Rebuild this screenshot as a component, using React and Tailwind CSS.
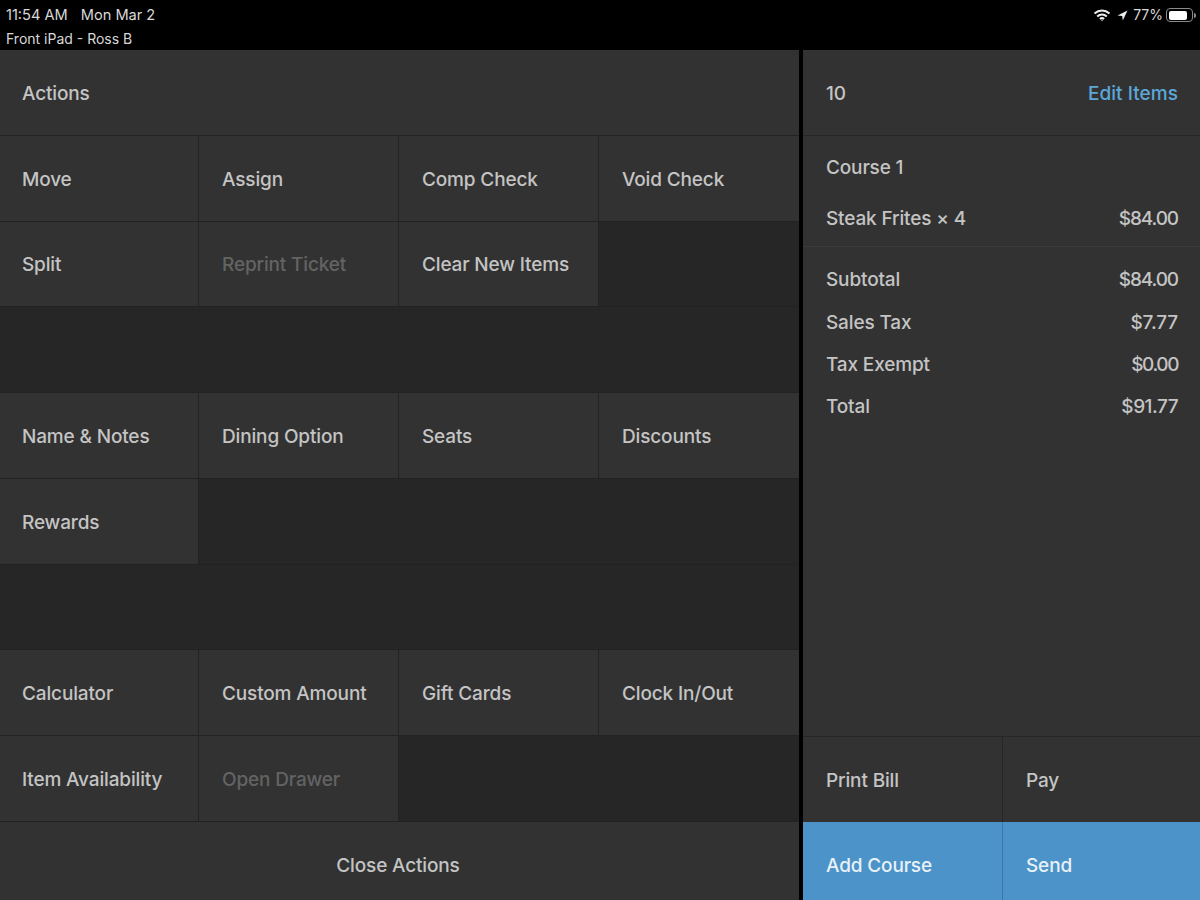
import React from "react";

const font = "font-['Inter','Liberation_Sans',sans-serif]";

function Cell({ label, dim, col }) {
  return (
    <div className={`flex h-full items-center bg-[#323232] border-b border-[#222222] pt-[2px] ${col === 0 ? "pl-[22px]" : "pl-[23px]"} ${col === 3 ? "" : "border-r"} ${dim ? "text-[#636363]" : "text-[#c4c4c4]"}`}>
      {label}
    </div>
  );
}

function Section({ rows }) {
  return (
    <div className="grid grid-cols-[199px_200px_200px_200px] auto-rows-[85.75px] bg-[#262626]">
      {rows.flat().map((c, i) =>
        c ? <Cell key={i} label={c.label || c} dim={c.dim} col={i % 4} /> : <div key={i} className="border-b border-[#222222]" />
      )}
    </div>
  );
}

function Line({ a, b, cls }) {
  return (
    <div className="flex h-[42.3px] items-center justify-between">
      <span>{a}</span>
      <span className={cls}>{b}</span>
    </div>
  );
}

export default function App() {
  return (
    <div className={`flex h-[900px] w-[1200px] flex-col overflow-hidden bg-black text-[19px] font-medium leading-none tracking-[-0.15px] ${font}`}>
      <div className="flex h-[50px] shrink-0 justify-between pl-[6px] pr-[4px] text-[14px] font-normal tracking-normal text-[#d8d8d8]">
        <div className="pt-[7px]">
          <div className="flex h-[16px] items-center gap-[13px] text-[14.6px]"><span>11:54 AM</span><span>Mon Mar 2</span></div>
          <div className="mt-[9px]">Front iPad - Ross B</div>
        </div>
        <div className="mt-[7px] flex h-[16px] items-center gap-[3px]">
          <svg width="18" height="13" viewBox="0 0 18 13" fill="none" stroke="#eeeeee" strokeWidth="2">
            <path d="M1.5 4.6C6 .6 12 .6 16.5 4.6" />
            <path d="M4.2 7.4c2.8-2.4 6.8-2.4 9.6 0" />
            <path d="M6.9 10c1.2-1 3-1 4.2 0" />
            <circle cx="9" cy="11.6" r=".7" fill="#eeeeee" stroke="none" />
          </svg>
          <svg width="11" height="11" viewBox="0 0 11 11" className="ml-[3px]"><path d="M10.5.5 .5 5.4l4.7.5.6 4.7z" fill="#eeeeee" /></svg>
          <span className="ml-[2px]">77%</span>
          <div className="flex h-[14px] w-[27px] rounded-[4px] border border-[#8a8a8a] p-[1.5px]">
            <div className="h-full w-[18px] rounded-[2px] bg-white" />
          </div>
          <div className="ml-[-2px] h-[5px] w-[2px] rounded-r-sm bg-[#8a8a8a]" />
        </div>
      </div>

      <div className="flex h-[857.5px] shrink-0">
        <div className="flex w-[799px] shrink-0 flex-col bg-[#262626]">
          <div className="flex h-[85.75px] shrink-0 items-center border-b border-[#222222] bg-[#323232] pl-[22px] pt-[3px] text-[#c4c4c4]">Actions</div>
          <Section rows={[["Move", "Assign", "Comp Check", "Void Check"], ["Split", { label: "Reprint Ticket", dim: true }, "Clear New Items", null], [null, null, null, null]]} />
          <Section rows={[["Name & Notes", "Dining Option", "Seats", "Discounts"], ["Rewards", null, null, null], [null, null, null, null]]} />
          <Section rows={[["Calculator", "Custom Amount", "Gift Cards", "Clock In/Out"], ["Item Availability", { label: "Open Drawer", dim: true }, null, null]]} />
          <div className="flex h-[85.75px] shrink-0 items-center justify-center bg-[#323232] pr-[3px] pt-[1px] text-[#c4c4c4]">Close Actions</div>
        </div>
        <div className="ml-[4px] flex w-[397px] shrink-0 flex-col bg-[#323232] text-[#c4c4c4]">
          <div className="flex h-[85.75px] shrink-0 items-center justify-between border-b border-[#262626] pl-[23px] pr-[22px] pt-[3px]">
            <span>10</span>
            <span className="tracking-[0.05px] text-[#5ba8d9]">Edit Items</span>
          </div>
          <div className="flex h-[63px] shrink-0 items-center pl-[23px]">Course 1</div>
          <div className="flex h-[48px] shrink-0 items-center justify-between border-b border-[#3b3b3b] pb-[7px] pl-[23px] pr-[22px]">
            <span>Steak Frites × 4</span>
            <span className="tracking-[-1.1px]">$84.00</span>
          </div>
          <div className="flex-1 pl-[23px] pr-[22px] pt-[12px]">
            <Line a="Subtotal" b="$84.00" cls="tracking-[-1.1px]" />
            <Line a="Sales Tax" b="$7.77" />
            <Line a="Tax Exempt" b="$0.00" cls="tracking-[-1.4px]" />
            <Line a="Total" b="$91.77" cls="tracking-[-0.5px]" />
          </div>
          <div className="grid shrink-0 grid-cols-[200px_197px] auto-rows-[85.75px]">
            <div className="flex items-center border-r border-t border-[#262626] pl-[23px] pt-[2px]">Print Bill</div>
            <div className="flex items-center border-t border-[#262626] pl-[23px] pt-[2px]">Pay</div>
            <div className="flex items-center border-r border-[#3d76a3] bg-[#4b93c8] pl-[23px] pt-[1px] text-[#e8f1f7]">Add Course</div>
            <div className="flex items-center bg-[#4b93c8] pl-[23px] pt-[1px] text-[#e8f1f7]">Send</div>
          </div>
        </div>
      </div>
    </div>
  );
}
